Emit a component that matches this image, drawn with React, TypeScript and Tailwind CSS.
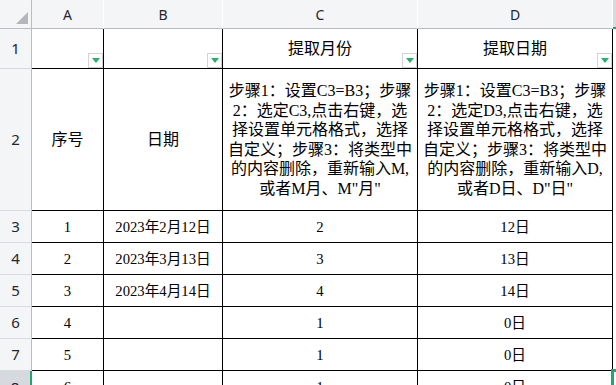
import React from "react"

const cellFont = "font-['Liberation_Serif','Noto_Sans_CJK_SC',serif] text-black"
const headFont = "font-['Noto_Sans','Noto_Sans_CJK_SC',sans-serif] text-[#1d2633]"

const colHead = `bg-[#f4f5f7] border-b border-r border-b-[#b4bdcc] border-r-[#ffffff] flex items-center justify-center text-[14px] ${headFont}`
const rowHead = `bg-[#f4f5f7] border-r border-b border-r-[#b4bdcc] border-b-[#d6dbe2] flex items-center justify-center text-[15px] ${headFont}`
const cell = `border-r border-b border-black flex items-center justify-center ${cellFont}`

const FilterButton = () => (
  <div className="absolute bottom-0 right-0 w-[15px] h-[15px] bg-white border border-[#d3d3d3] flex items-center justify-center">
    <svg width="8" height="5" viewBox="0 0 8 5">
      <polygon points="0,0 8,0 4,5" fill="#25b06b" />
    </svg>
  </div>
)

const stepsC = [
  "步骤1：设置C3=B3；步骤",
  "2：选定C3,点击右键，选",
  "择设置单元格格式，选择",
  "自定义；步骤3：将类型中",
  "的内容删除，重新输入M,",
  "或者M月、M\"月\"",
]

const stepsD = [
  "步骤1：设置C3=B3；步骤",
  "2：选定D3,点击右键，选",
  "择设置单元格格式，选择",
  "自定义；步骤3：将类型中",
  "的内容删除，重新输入D,",
  "或者D日、D\"日\"",
]

const rows = [
  { n: "3", a: "1", b: "2023年2月12日", c: "2", d: "12日" },
  { n: "4", a: "2", b: "2023年3月13日", c: "3", d: "13日" },
  { n: "5", a: "3", b: "2023年4月14日", c: "4", d: "14日" },
  { n: "6", a: "4", b: "", c: "1", d: "0日" },
  { n: "7", a: "5", b: "", c: "1", d: "0日" },
]

export default function App() {
  return (
    <div className="w-[616px] h-[385px] overflow-hidden bg-white">
      <div className="grid grid-cols-[32px_72px_119px_195px_195px_1fr] grid-rows-[29px_40px_142px_32px_32px_32px_32px_32px_32px]">
        {/* header row */}
        <div className="bg-[#f4f5f7] border-r border-b border-[#b4bdcc] relative">
          <svg className="absolute left-[16px] top-[12px]" width="12" height="12" viewBox="0 0 12 12">
            <polygon points="12,0 12,12 0,12" fill="#b3b6bb" />
          </svg>
        </div>
        <div className={colHead}>A</div>
        <div className={colHead}>B</div>
        <div className={colHead}>C</div>
        <div className={colHead}>D</div>
        <div className="bg-[#d7dbe1] border-b-2 border-[#1fa86c]" />

        {/* row 1 */}
        <div className={rowHead}>1</div>
        <div className={`${cell} relative`}>
          <FilterButton />
        </div>
        <div className={`${cell} relative`}>
          <FilterButton />
        </div>
        <div className={`${cell} relative text-[16px]`}>
          提取月份
          <FilterButton />
        </div>
        <div className={`${cell} relative text-[16px]`}>
          提取日期
          <FilterButton />
        </div>
        <div />

        {/* row 2 */}
        <div className={rowHead}>2</div>
        <div className={`${cell} text-[16px]`}>序号</div>
        <div className={`${cell} text-[16px]`}>日期</div>
        <div className={`${cell} text-[16px] leading-[19.5px]`}>
          <div className="flex flex-col items-center">
            {stepsC.map((l, i) => (
              <div key={i} className="whitespace-nowrap">{l}</div>
            ))}
          </div>
        </div>
        <div className={`${cell} text-[16px] leading-[19.5px]`}>
          <div className="flex flex-col items-center">
            {stepsD.map((l, i) => (
              <div key={i} className="whitespace-nowrap">{l}</div>
            ))}
          </div>
        </div>
        <div />

        {/* data rows */}
        {rows.map((r) => (
          <React.Fragment key={r.n}>
            <div className={rowHead}>{r.n}</div>
            <div className={`${cell} text-[14.67px]`}>{r.a}</div>
            <div className={`${cell} text-[14.67px]`}>{r.b}</div>
            <div className={`${cell} text-[14.67px]`}>{r.c}</div>
            <div className={`${cell} text-[14.67px]`}>{r.d}</div>
            <div />
          </React.Fragment>
        ))}

        {/* row 8, selected */}
        <div className={`bg-[#d6d9de] border-r-2 border-r-[#1fa86c] flex items-center justify-center text-[15px] ${headFont}`}>8</div>
        <div className={`${cell} text-[14.67px]`}>6</div>
        <div className={`${cell} text-[14.67px]`} />
        <div className={`${cell} text-[14.67px]`}>1</div>
        <div className={`${cell} text-[14.67px]`}>0日</div>
        <div className="relative">
          <div className="absolute -left-[2px] -top-[2px] w-[40px] h-[40px] border-[3px] border-[#1fa86c]" />
        </div>
      </div>
    </div>
  )
}
